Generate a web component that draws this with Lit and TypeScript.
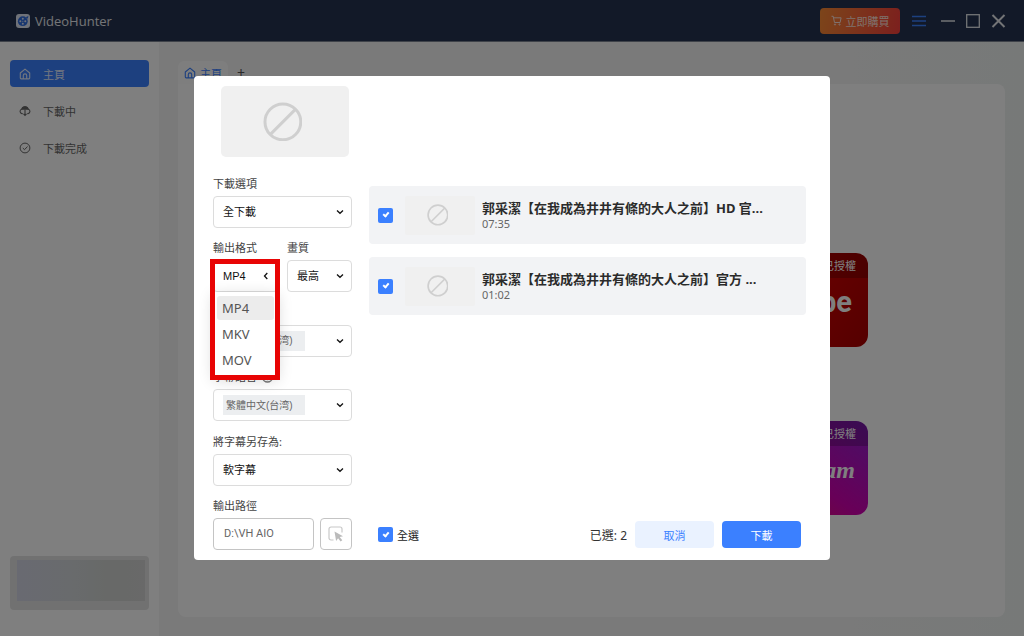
import { LitElement, html, css, svg } from "lit";
import { customElement, property, state } from "lit/decorators.js";

const chevronDown = svg`<path d="M3 4.500 6 7.300 9 4.500" fill="none" stroke="currentColor" stroke-width="1.300"/>`;
const chevronLeft = svg`<path d="M7.300 3 4.500 6 7.300 9" fill="none" stroke="currentColor" stroke-width="1.300"/>`;

const home = html`<svg viewBox="0 0 12 12" width="12" height="12" fill="none" stroke="currentColor" stroke-width="1.1" aria-hidden="true">
  <path d="M1.300 5 6 1.100l4.700 3.900v5.100q0 .8-.8.8H2.100q-.8 0-.8-.8zM4.300 10.900V7.600a1.700 1.700 0 0 1 3.400 0v3.300" stroke-linejoin="round"/></svg>`;
const cloud = html`<svg viewBox="0 0 12 12" width="12" height="12" fill="none" stroke="currentColor" stroke-width="1.100" aria-hidden="true">
  <path d="M3.700 8.600H2.900A2.200 2.200 0 0 1 2.700 4.300 3.400 3.400 0 0 1 9.300 4.300 2.200 2.200 0 0 1 9.100 8.600H8.300"/><path d="M3 4.100A3.100 3.100 0 0 1 9 4.100z" fill="currentColor"/><path d="M6 4.500v5.700M4.500 8.900 6 10.400 7.500 8.900"/></svg>`;
const done = html`<svg viewBox="0 0 12 12" width="12" height="12" fill="none" stroke="currentColor" stroke-width="1" aria-hidden="true">
  <circle cx="6" cy="6" r="4.900"/><path d="m3.800 6 1.700 1.700 3-3.200"/></svg>`;

@customElement("blocked-thumb")
class BlockedThumb extends LitElement {
  static styles = css`
    :host { display: flex; align-items: center; justify-content: center; box-sizing: border-box; padding-right: 5px; background: #f0f0f0; color: #cfcfcf; }
    .mark { height: 56%; }
  `;
  @property({ type: Number }) weight = 3;
  render() {
    return html`<svg class="mark" viewBox="0 0 40 40" fill="none" stroke="currentColor" stroke-width=${this.weight} aria-hidden="true">
      <circle cx="20" cy="20" r="18"/><path d="M7.400 32.600 32.600 7.400"/></svg>`;
  }
}

@customElement("form-select")
class FormSelect extends LitElement {
  static styles = css`
    :host { display: flex; flex-direction: column; gap: 3px; min-width: 0; }
    .label { display: flex; align-items: end; gap: 5px; height: 19px; font-size: 11px; line-height: 18px; color: #444; }
    .mark { margin-bottom: 3px; }
    .box { display: grid; align-items: center; }
    .select { grid-area: 1 / 1; width: 100%; height: 32px; box-sizing: border-box; appearance: none; border: 1px solid #dcdcdc; border-radius: 4px; background: #fff; padding: 0 20px 0 9px; font: inherit; font-family: "Liberation Sans", "Noto Sans CJK TC", sans-serif; font-size: 11px; color: #111; }
    .tagged { padding-left: 12px; font-size: 10px; color: #666; background: linear-gradient(#eceef0, #eceef0) 9px center / 82px 20px no-repeat #fff; }
    .arrow { grid-area: 1 / 1; justify-self: end; margin-right: 6px; color: #111; pointer-events: none; }
  `;
  @property() label = "";
  @property() name = "";
  @property({ type: Array }) options: string[] = [];
  @property({ type: Boolean }) tag = false;
  @property({ type: Boolean }) info = false;
  @property({ type: Boolean }) open = false;
  render() {
    return html`
      <label class="label" for="s">${this.label}${this.info
        ? html`<svg class="mark" width="11" height="11" viewBox="0 0 11 11" fill="none" stroke="#777" stroke-width="1.500" aria-hidden="true"><circle cx="5.500" cy="5.500" r="4.600"/><path d="M5.500 4.700v3.500M5.500 2.600v1.200"/></svg>`
        : ""}</label>
      <div class="box">
        <select id="s" aria-label=${this.name || this.label} class="select ${this.tag ? "tagged" : ""}">${this.options.map((o) => html`<option>${o}</option>`)}</select>
        <svg class="arrow" width="12" height="12" viewBox="0 0 12 12" aria-hidden="true">${this.open ? chevronLeft : chevronDown}</svg>
      </div>`;
  }
}

@customElement("app-root")
class AppRoot extends LitElement {
  static styles = css`
    :host { display: grid; grid-template-rows: auto 1fr; position: relative; min-height: 100vh; background: #f4f5f5; font-family: "Noto Sans", "Noto Sans CJK TC", sans-serif; font-size: 11px; color: #333; }
    * { box-sizing: border-box; }
    button { font: inherit; border: 0; padding: 0; margin: 0; background: none; color: inherit; }
    svg { display: block; flex: none; }

    .header { display: flex; align-items: center; gap: 12px; height: 42px; padding: 0 18px 0 16px; background: #243350; border-bottom: 1px solid #7d8492; color: #fff; }
    .brand { display: flex; align-items: center; gap: 5px; margin-right: auto; font-family: "Open Sans", sans-serif; font-size: 13px; color: #e8eaee; }
    .buy { display: flex; align-items: center; justify-content: center; gap: 4px; width: 80px; height: 26px; border-radius: 4px; background: linear-gradient(100deg, #f88a34, #f8403c); color: #ffe3da; }
    .menu { color: #3b80ff; margin-right: 2px; }
    .window { display: flex; gap: 11px; color: #e6e8ec; }

    .body { display: grid; grid-template-columns: 159px 1fr; }
    .side { display: flex; flex-direction: column; gap: 10px; padding: 18px 10px 26px; background: #fff; }
    .item { display: flex; align-items: center; gap: 12px; height: 27px; padding: 0 9px; border-radius: 4px; color: #666; text-decoration: none; }
    .active { background: #3b80ff; color: #e4edff; }
    .account { margin-top: auto; height: 54px; padding: 4px 4px 9px 7px; border-radius: 4px; background: #e3e3e3; }
    .blur { height: 100%; background: linear-gradient(90deg, #d2d5e4, #d2d6d9 45%, #d0d3d0 70%, #d2d2d2); }

    .main { display: flex; flex-direction: column; padding: 19px; background: linear-gradient(90deg, #f4f4f4 80%, #eef3f1); }
    .tabs { display: flex; align-items: center; gap: 9px; height: 23px; }
    .tab { display: flex; align-items: center; gap: 4px; height: 23px; padding: 0 6px; border-radius: 6px 6px 0 0; background: #fdfdfd; color: #3b80ff; text-decoration: none; }
    .add { font-size: 14px; line-height: 20px; color: #555; }
    .panel { flex: 1; display: flex; flex-direction: column; align-items: flex-end; gap: 74px; padding: 169px 137px 0; border-radius: 0 8px 8px 8px; background: #fff; }
    .site { width: 150px; height: 94px; border-radius: 12px; overflow: hidden; color: #fff; text-align: right; }
    .video { background: linear-gradient(120deg, #e00000 30%, #aa0000); }
    .photo { background: linear-gradient(215deg, #9020d0, #d000b0 50%, #e81468 80%); }
    .badge { height: 25px; padding-right: 12px; line-height: 25px; background: rgba(0, 0, 0, 0.2); }
    .name { padding-right: 16px; line-height: 48px; font-family: "Liberation Sans Narrow", Roboto, sans-serif; font-weight: 700; font-size: 29px; }
    .script { padding-right: 13px; font-family: "Liberation Serif", serif; font-style: italic; font-size: 24px; }

    .scrim { position: absolute; inset: 0; display: flex; align-items: center; justify-content: center; background: rgba(0, 0, 0, 0.5); }
    .dialog { display: grid; grid-template-columns: 139px 1fr; gap: 17px; width: min(636px, 100% - 64px); min-height: calc(100vh - 152px); padding: 10px 24px 10px 19px; border-radius: 4px; background: #fff; }
    .left { display: flex; flex-direction: column; gap: 17px; min-width: 0; }
    .preview { height: 71px; margin: 0 3px 0 8px; border-radius: 5px; }
    .fields { flex: 1; display: flex; flex-direction: column; justify-content: space-between; }
    .pair { display: grid; grid-template-columns: 1fr 1fr; gap: 9px; }
    .format { position: relative; display: grid; }
    .popup { position: absolute; top: 21px; left: -3px; width: 70px; height: 121px; border: 5px solid #e80404; pointer-events: none; }
    .list { position: absolute; top: 54px; left: 0; width: 65px; margin: 0; padding: 4px 4px 3px; list-style: none; background: #fff; box-shadow: 0 3px 14px rgba(0, 0, 0, 0.16); font-size: 13px; line-height: 24px; color: #555; }
    .option { margin-bottom: 2px; padding-left: 5px; border-radius: 3px; }
    .chosen { background: #ececec; }
    .path { display: flex; flex-direction: column; gap: 3px; color: #444; }
    .caption { display: flex; align-items: end; height: 19px; line-height: 18px; }
    .row { display: grid; grid-template-columns: 1fr 32px; gap: 6px; }
    .input { width: 100%; height: 32px; border: 1px solid #c4c4c4; border-radius: 4px; padding: 0 10px; font-family: Roboto, sans-serif; font-size: 11px; color: #666; }
    .browse { display: flex; align-items: center; justify-content: center; height: 32px; border: 1px solid #c4c4c4; border-radius: 4px; color: #c8c8c8; }

    .right { display: flex; flex-direction: column; min-width: 0; padding-top: 100px; }
    .videos { display: flex; flex-direction: column; gap: 13px; }
    .entry { display: flex; align-items: center; height: 58px; padding: 0 9px; border-radius: 4px; background: #f2f3f5; }
    .check { flex: none; appearance: none; width: 15px; height: 15px; margin: 0; border-radius: 2px; background: #3b80ff; display: grid; place-items: center; }
    .check:checked::before { content: ""; width: 2px; height: 4px; box-sizing: content-box; margin-top: -2px; border: solid #fff; border-width: 0 2px 2px 0; transform: rotate(40deg); }
    .thumb { flex: none; width: 70px; height: 39px; margin: 0 7px 0 12px; border-radius: 2px; }
    .info { min-width: 0; display: flex; flex-direction: column; }
    .title { font-weight: 700; font-size: 13px; line-height: 17px; color: #2b2b2b; white-space: nowrap; overflow: hidden; }
    .time { font-size: 11px; line-height: 14px; color: #666; }
    .footer { display: flex; align-items: center; gap: 8px; margin: auto 5px 2px 9px; }
    .all { display: flex; align-items: center; gap: 4px; margin-right: auto; color: #222; }
    .count { font-size: 12px; }
    .action { width: 79px; height: 27px; border-radius: 4px; }
    .cancel { background: #eaf2ff; color: #3b80ff; }
    .go { background: #3b80ff; color: #fff; }
  `;

  @state() private videos = [
    { title: "郭采潔【在我成為井井有條的大人之前】HD 官...", time: "07:35" },
    { title: "郭采潔【在我成為井井有條的大人之前】官方 ...", time: "01:02" },
  ];
  @state() private format = "MP4";

  render() {
    return html`
      <header class="header">
        <div class="brand">
          <svg width="14" height="14" viewBox="0 0 14 14" aria-hidden="true"><rect width="14" height="14" rx="3" fill="#dfe5f3"/><circle cx="6.800" cy="7.200" r="4.900" fill="#2f6de0"/><g fill="#dfe5f3"><circle cx="6.800" cy="4.700" r="1"/><circle cx="6.800" cy="9.700" r="1"/><circle cx="4.300" cy="7.200" r="1"/><circle cx="9.300" cy="7.200" r="1"/><circle cx="6.800" cy="7.200" r=".5"/></g><path d="m9.600 3.200 2.800-1.300-.6 2.800z" fill="#2f6de0"/></svg>
          <span>VideoHunter</span>
        </div>
        <button class="buy">
          <svg width="11" height="11" viewBox="0 0 11 11" fill="none" stroke="currentColor" aria-hidden="true"><path d="M.5 1.300h1.700l1.300 6.200h5.600l1-4.700H2.600"/><circle cx="4" cy="9.500" r=".6"/><circle cx="8.500" cy="9.500" r=".6"/></svg>
          <span>立即購買</span>
        </button>
        <button class="menu" aria-label="選單"><svg width="14" height="14" viewBox="0 0 14 14" stroke="currentColor" stroke-width="1.500"><path d="M0 2.500h14M0 7h14M0 11.500h14"/></svg></button>
        <div class="window">
          <button aria-label="最小化"><svg width="15" height="14" viewBox="0 0 15 14" stroke="currentColor" stroke-width="1.500"><path d="M1 7h14"/></svg></button>
          <button aria-label="最大化"><svg width="14" height="14" viewBox="0 0 14 14" fill="none" stroke="currentColor" stroke-width="1.300"><rect x=".7" y=".7" width="12.600" height="12.600"/></svg></button>
          <button aria-label="關閉"><svg width="15" height="14" viewBox="0 0 15 14" stroke="currentColor" stroke-width="2"><path d="m1.500 1 12 12M13.500 1l-12 12"/></svg></button>
        </div>
      </header>
      <div class="body">
        <nav class="side">
          <a class="item active" href="#home">${home}<span>主頁</span></a>
          <a class="item" href="#active">${cloud}<span>下載中</span></a>
          <a class="item" href="#done">${done}<span>下載完成</span></a>
          <div class="account"><div class="blur"></div></div>
        </nav>
        <main class="main">
          <div class="tabs">
            <a class="tab" href="#home">${home}<span>主頁</span></a>
            <button class="add" aria-label="新增分頁">+</button>
          </div>
          <section class="panel">
            <div class="site video"><div class="badge">已授權</div><div class="name">YouTube</div></div>
            <div class="site photo"><div class="badge">已授權</div><div class="name script">Instagram</div></div>
          </section>
        </main>
      </div>
      <div class="scrim">
        <div class="dialog" role="dialog" aria-modal="true">
          <div class="left">
            <blocked-thumb class="preview" .weight=${3}></blocked-thumb>
            <div class="fields">
              <form-select label="下載選項" .options=${["全下載"]}></form-select>
              <div class="pair">
                <div class="format">
                  <form-select label="輸出格式" open .options=${[this.format]}></form-select>
                  <ul class="list" role="listbox">
                    ${["MP4", "MKV", "MOV"].map((f) => html`<li class="option ${f === this.format ? "chosen" : ""}" role="option" @click=${() => (this.format = f)}>${f}</li>`)}
                  </ul>
                  <div class="popup"></div>
                </div>
                <form-select label="畫質" .options=${["最高"]}></form-select>
              </div>
              <form-select name="音訊" tag .options=${["繁體中文(台湾)"]}></form-select>
              <form-select label="字幕語言" tag info .options=${["繁體中文(台湾)"]}></form-select>
              <form-select label="將字幕另存為:" .options=${["軟字幕"]}></form-select>
              <div class="path">
                <label class="caption" for="path">輸出路徑</label>
                <div class="row">
                  <input id="path" class="input" value="D:\\VH AIO" />
                  <button class="browse" aria-label="瀏覽"><svg width="16" height="16" viewBox="0 0 16 16" aria-hidden="true"><path d="M5.500 14H3a2 2 0 0 1-2-2V3a2 2 0 0 1 2-2h9a2 2 0 0 1 2 2v3.500" fill="none" stroke="currentColor" stroke-width="1.200"/><path d="m6.500 5.500 8.500 4.700-3.300.9 2.600 3.200-1.700 1.300-2.500-3.300-2 2.600z" fill="#bbb"/></svg></button>
                </div>
              </div>
            </div>
          </div>
          <div class="right">
            <div class="videos">
              ${this.videos.map((v) => html`
                <label class="entry">
                  <input class="check" type="checkbox" checked />
                  <blocked-thumb class="thumb"></blocked-thumb>
                  <span class="info"><span class="title">${v.title}</span><span class="time">${v.time}</span></span>
                </label>`)}
            </div>
            <div class="footer">
              <label class="all"><input class="check" type="checkbox" checked />全選</label>
              <span class="count">已選: ${this.videos.length}</span>
              <button class="action cancel">取消</button>
              <button class="action go">下載</button>
            </div>
          </div>
        </div>
      </div>`;
  }
}
